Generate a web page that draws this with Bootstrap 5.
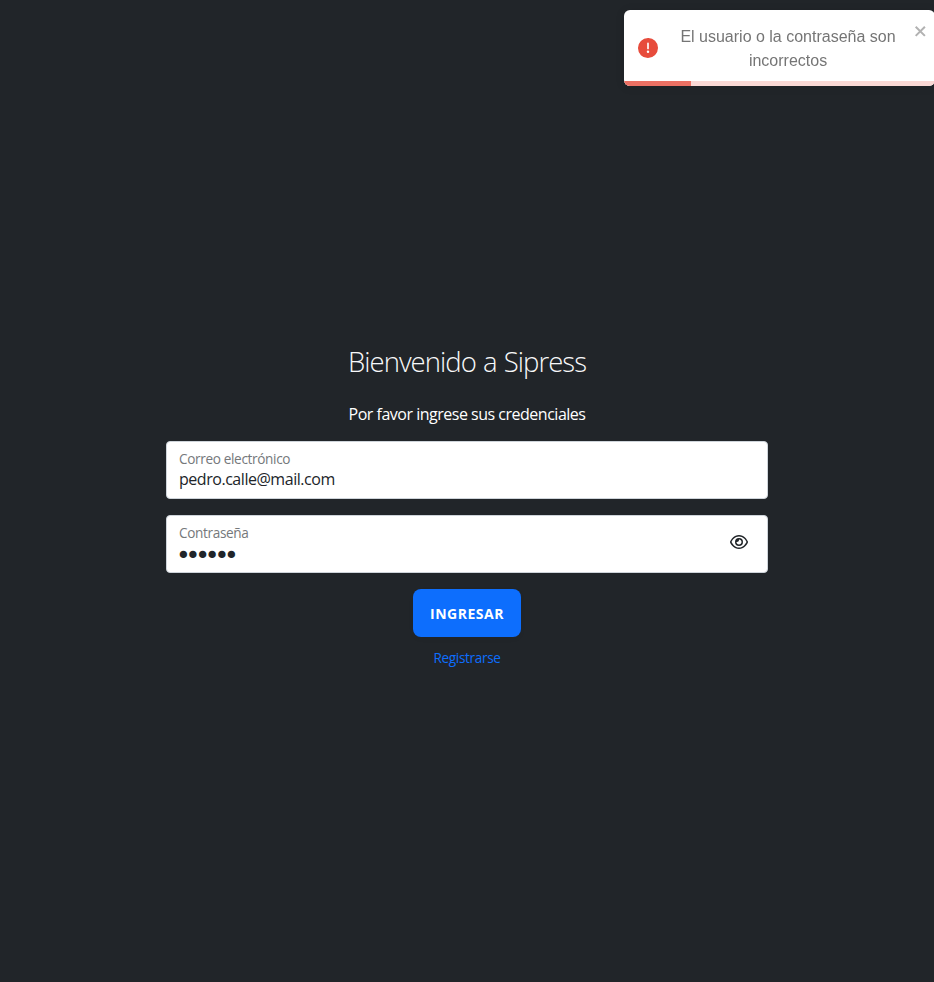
<!DOCTYPE html>
<html lang="es">
<head>
<meta charset="utf-8">
<meta name="viewport" content="width=device-width, initial-scale=1">
<title>Sipress</title>
<link href="https://cdn.jsdelivr.net/npm/bootstrap@5.3.0/dist/css/bootstrap.min.css" rel="stylesheet">
<style>
body{background:#212529;font-family:"Open Sans","Noto Sans",sans-serif;overflow:hidden}
.login{width:602px;padding-top:345px}
.login h1{font-size:27.5px;line-height:34px;font-weight:300;color:#f8f9fa;margin-bottom:23px;letter-spacing:-.97px;word-spacing:1px}
.intro{font-size:16px;line-height:24px;margin-bottom:15px;letter-spacing:-.49px}
.field{height:58px;border:1px solid #ced4da;border-radius:4px;background:#fff;color:#212529;padding:7px 12px 9px}
.field label{font-size:13.6px;line-height:20px;color:#75787b;letter-spacing:-.35px}
.field input{font-size:16px;line-height:20px;height:20px;color:#212529;letter-spacing:-.46px;outline:0}
.field input[type=password]{font-family:"DejaVu Sans",sans-serif;font-size:25px;line-height:24px;height:24px;margin-bottom:-4px;letter-spacing:-5.15px;margin-left:-3px}
.eye{width:18px;height:16px;margin-right:7px;margin-top:-3px}
.enter{width:108px;height:48px;border-radius:8px;font-size:14px;font-weight:700;letter-spacing:.5px;background:#0d6efd;padding:0}
.signup{font-size:13.6px;line-height:20px;color:#0d6efd;margin-top:11px;letter-spacing:-.35px}
.notice{top:10px;left:624px;width:311px;height:76px;border-radius:6px;background:#fff;color:#757575;font:16px/24px "Liberation Sans",Arial,sans-serif;padding:14px 8px 14px 14px;box-shadow:0 1px 10px rgba(0,0,0,.1)}
.message{width:240px;margin-left:10px;padding-top:2px}
.timer{height:5px;background:#fad8d5}
.timer div{background:#ec7063}
.dismiss{top:15px;right:9px;width:12px;height:13px}
</style>
<script src="https://cdn.jsdelivr.net/npm/bootstrap@5.3.0/dist/js/bootstrap.bundle.min.js"></script>
</head>
<body>
<div class="notice position-fixed overflow-hidden d-flex align-items-center" role="alert">
  <svg width="20" height="20" viewBox="0 0 24 24" class="flex-shrink-0"><path fill="#e74c3c" d="M11.983 0a12.206 12.206 0 00-8.51 3.653A11.8 11.8 0 000 12.207 11.779 11.779 0 0011.8 24h.214A12.111 12.111 0 0024 11.791 11.766 11.766 0 0011.983 0zM10.5 16.542a1.476 1.476 0 011.449-1.53h.027a1.527 1.527 0 011.523 1.47 1.475 1.475 0 01-1.449 1.53h-.027a1.529 1.529 0 01-1.523-1.47zM11 12.5v-6a1 1 0 012 0v6a1 1 0 11-2 0z"/></svg>
  <div class="message text-center">El usuario o la contraseña son incorrectos</div>
  <button type="button" class="dismiss position-absolute border-0 bg-transparent p-0 d-flex" aria-label="Cerrar"><svg width="12" height="13" viewBox="0 0 12 13" fill="none" stroke="#b2b2b2" stroke-width="2"><path d="M1.700 1.700l9.200 9.200M10.900 1.700l-9.200 9.200"/></svg></button>
  <div class="timer position-absolute bottom-0 start-0 w-100"><div class="h-100" style="width:21.5%"></div></div>
</div>
<main class="login mx-auto d-flex flex-column">
  <h1 class="text-center">Bienvenido a Sipress</h1>
  <p class="intro text-center text-white">Por favor ingrese sus credenciales</p>
  <form>
    <div class="field d-flex flex-column mb-3">
      <label for="mail">Correo electrónico</label>
      <input id="mail" type="email" class="border-0 p-0 w-100 bg-transparent" value="pedro.calle@mail.com">
    </div>
    <div class="field d-flex align-items-center mb-3">
      <div class="d-flex flex-column flex-grow-1">
        <label for="pass">Contraseña</label>
        <input id="pass" type="password" class="border-0 p-0 w-100 bg-transparent" value="secret">
      </div>
      <svg class="eye" viewBox="0 0 576 512" fill="#212529"><path d="M288 80c-65.2 0-118.800 29.600-159.900 67.700C89.600 183.500 63 226 49.400 256c13.600 30 40.200 72.500 78.600 108.300C169.200 402.400 222.800 432 288 432s118.800-29.600 159.900-67.700C486.400 328.500 513 286 526.600 256c-13.600-30-40.200-72.500-78.600-108.300C406.800 109.600 353.200 80 288 80zM95.400 112.600C142.500 68.800 207.200 32 288 32s145.500 36.800 192.600 80.600c46.800 43.500 78.100 95.400 93 131.100 3.300 7.900 3.300 16.700 0 24.600-14.900 35.700-46.200 87.700-93 131.100C433.500 443.200 368.800 480 288 480s-145.500-36.800-192.600-80.600C48.600 356 17.300 304 2.500 268.300c-3.300-7.900-3.300-16.700 0-24.600C17.300 208 48.600 156 95.400 112.600zM288 336c44.200 0 80-35.800 80-80s-35.800-80-80-80h-2c1.300 5.100 2 10.500 2 16 0 35.300-28.700 64-64 64-5.500 0-10.900-.7-16-2v2c0 44.200 35.800 80 80 80zm0-208a128 128 0 1 1 0 256 128 128 0 1 1 0-256z"/></svg>
    </div>
    <div class="d-flex flex-column align-items-center">
      <button type="button" class="enter btn btn-primary border-0 shadow-sm">INGRESAR</button>
      <a href="#" class="signup text-decoration-none">Registrarse</a>
    </div>
  </form>
</main>
</body>
</html></script>
